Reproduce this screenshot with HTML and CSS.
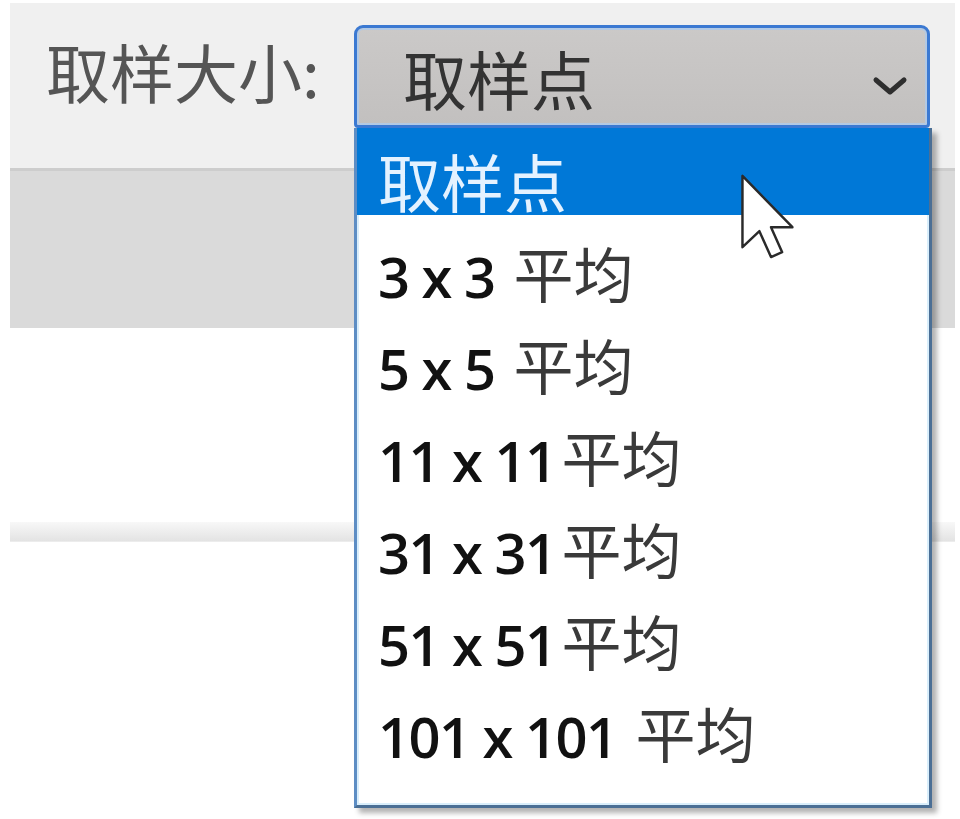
FILE: index.html
```html
<!DOCTYPE html>
<html lang="zh-CN">
<head>
<meta charset="UTF-8">
<meta name="viewport" content="width=device-width, initial-scale=1.0">
<title>取样大小</title>
<link rel="stylesheet" href="styles.css">
</head>
<body>
  <div class="page">
    <div class="toolbar">
      <span class="label">取样大小:</span>
      <div class="picker">
        <div class="select">
          <span class="value">取样点</span>
          <svg class="chevron" width="36" height="22" viewBox="0 0 36 22">
            <path d="M4 5 L18 17 L32 5" fill="none" stroke="#2e2e2e" stroke-width="5" stroke-linecap="round" stroke-linejoin="round"/>
          </svg>
        </div>
        <ul class="options">
          <li class="option active"><span class="zh">取样点</span></li>
          <li class="option">3 x 3 <span class="zh">平均</span></li>
          <li class="option">5 x 5 <span class="zh">平均</span></li>
          <li class="option">11 x 11<span class="zh">平均</span></li>
          <li class="option">31 x 31<span class="zh">平均</span></li>
          <li class="option">51 x 51<span class="zh">平均</span></li>
          <li class="option">101 x 101 <span class="zh">平均</span></li>
        </ul>
        <!-- mouse pointer over the first option -->
        <svg class="cursor" width="58" height="90" viewBox="0 0 13 20">
          <path d="M1 1 V17 L4.8 13.4 L7.4 19.2 L9.9 18.1 L7.4 12.5 H12.2 Z" fill="#fff" stroke="#2a2a2a" stroke-width="0.55" stroke-linejoin="round"/>
        </svg>
      </div>
    </div>
    <div class="band"></div>
    <div class="spacer"></div>
    <div class="strip"></div>
  </div>
</body>
</html>
```

FILE: styles.css
```css
body {
  margin: 0;
  background-color: #fff;
  font-family: "Noto Sans CJK SC", "Noto Sans", sans-serif;
}
.page {
  box-sizing: border-box;
  min-height: 819px;
  padding: 3px 5px 0 10px;
}
.toolbar {
  position: relative;
  z-index: 2;
  display: flex;
  align-items: flex-start;
  height: 165px;
  padding-left: 36px;
  background-color: #f0f0f0;
}
.label {
  flex: none;
  width: 308px;
  margin-top: 35px;
  font-size: 64px;
  line-height: 64px;
  color: #555;
}
.picker {
  position: relative;
  margin-top: 22px;
}
.select {
  box-sizing: border-box;
  display: flex;
  align-items: center;
  width: 576px;
  height: 103px;
  padding: 0 19px 0 46px;
  border: 3px solid #3b79d2;
  border-radius: 9px 9px 4px 4px;
  background: linear-gradient(#cbc9c8, #c2c0bf);
  box-shadow: inset 0 0 0 2px #b2c9e4;
}
.value {
  font-size: 64px;
  line-height: 64px;
  color: #333;
}
.chevron {
  margin-left: auto;
  margin-top: 19px;
}
.options {
  box-sizing: border-box;
  position: absolute;
  top: 103px;
  left: 0;
  width: 578px;
  height: 680px;
  margin: 0;
  padding: 0 0 33px;
  list-style: none;
  background-color: #fff;
  border: 3px solid #5d8dc4;
  border-top: none;
  border-right-color: #4b6f95;
  border-bottom-color: #4b6f95;
  box-shadow: inset 0 0 0 2px #d9eefb, 5px 5px 5px rgba(0, 0, 0, 0.3);
}
.option {
  box-sizing: border-box;
  height: 92px;
  padding: 22px 0 0 21px;
  font-family: "Open Sans", "Noto Sans CJK SC", sans-serif;
  font-weight: 600;
  font-size: 56px;
  line-height: 60px;
  letter-spacing: -1.5px;
  color: #111;
  white-space: nowrap;
}
.option .zh {
  margin-left: 6px;
  font-family: "Noto Sans CJK SC", sans-serif;
  font-weight: 400;
  font-size: 60px;
  letter-spacing: 0;
  color: #3a3a3a;
}
.option.active {
  background: linear-gradient(#0078d7 0, #0078d7 87px, transparent 87px);
}
.option.active .zh {
  margin-left: 0;
  font-size: 63px;
  color: #e4f2ff;
}
.cursor {
  position: absolute;
  left: 384px;
  top: 146px;
}
.band {
  box-sizing: border-box;
  height: 160px;
  border-top: 3px solid #cdcdcd;
  background-color: #dadada;
}
.spacer {
  height: 194px;
}
.strip {
  height: 19px;
  border-bottom: 1px solid #ececec;
  background: linear-gradient(#f8f8f8, #e3e3e3);
}
```
